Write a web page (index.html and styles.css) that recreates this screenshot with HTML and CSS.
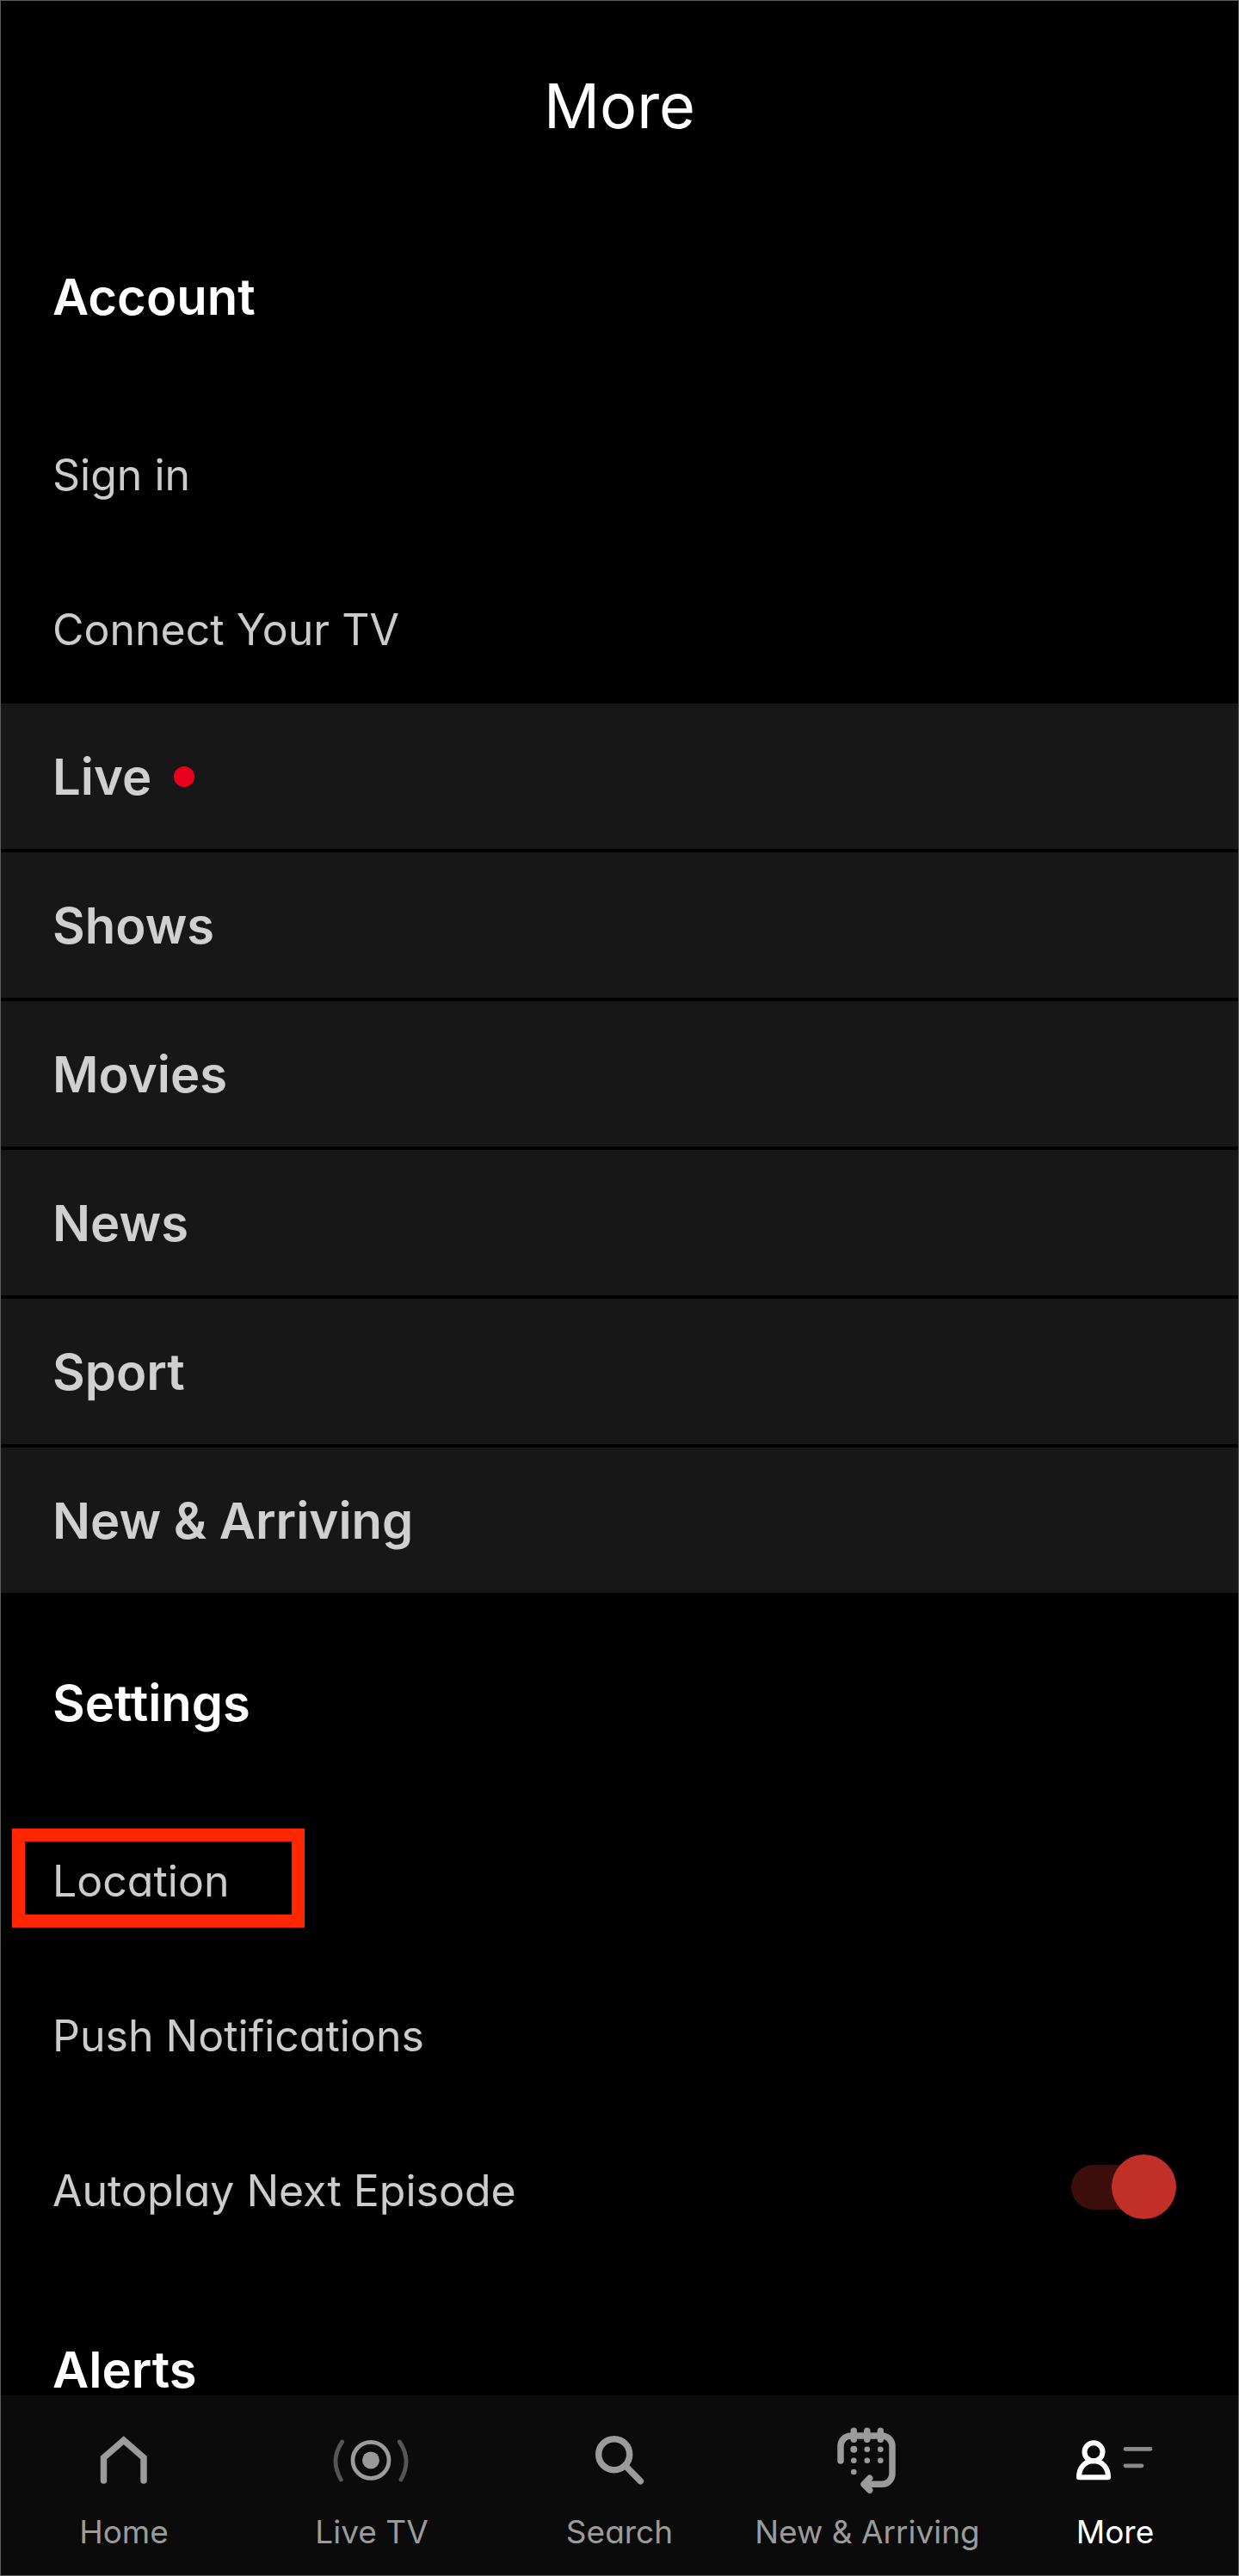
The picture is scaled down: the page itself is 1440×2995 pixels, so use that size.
FILE: index.html
```html
<!DOCTYPE html>
<html lang="en">
<head>
<meta charset="utf-8">
<meta name="viewport" content="width=device-width, initial-scale=1">
<title>More</title>
<link rel="stylesheet" href="styles.css">
</head>
<body>
<header class="header"><h1 class="title">More</h1></header>
<main class="main">
  <section class="group">
    <h2 class="heading">Account</h2>
    <ul class="items">
      <li class="item"><a href="#">Sign in</a></li>
      <li class="item"><a href="#">Connect Your TV</a></li>
    </ul>
  </section>
  <nav class="browse" aria-label="Browse">
    <a class="browse-link" href="#">Live <span class="live-dot"></span></a>
    <a class="browse-link" href="#">Shows</a>
    <a class="browse-link" href="#">Movies</a>
    <a class="browse-link" href="#">News</a>
    <a class="browse-link" href="#">Sport</a>
    <a class="browse-link" href="#">New &amp; Arriving</a>
  </nav>
  <section class="group">
    <h2 class="heading">Settings</h2>
    <ul class="items">
      <li class="item item-marked"><a href="#">Location</a></li>
      <li class="item"><a href="#">Push Notifications</a></li>
      <li class="item item-switch">
        <label for="autoplay">Autoplay Next Episode</label>
        <input class="switch" type="checkbox" role="switch" id="autoplay" checked>
      </li>
    </ul>
  </section>
  <section class="group">
    <h2 class="heading">Alerts</h2>
  </section>
</main>
<nav class="tabs" aria-label="Main">
  <a class="tab" href="#">
    <svg class="tab-icon" viewBox="0 0 100 80" aria-hidden="true">
      <path d="M26.5 64V37.5L49.8 17.2 73 37.5V64" stroke-width="7.5" stroke-linejoin="miter"/>
    </svg>
    Home
  </a>
  <a class="tab" href="#">
    <svg class="tab-icon" viewBox="0 0 100 80" aria-hidden="true">
      <circle cx="49" cy="40.4" r="21" stroke-width="4.8"/>
      <circle class="solid" cx="49" cy="40.4" r="10"/>
      <path class="dim" d="M15.7 19Q1 40 14.3 63M82.3 19Q97 40 84 63" stroke-width="4.8"/>
    </svg>
    Live TV
  </a>
  <a class="tab" href="#">
    <svg class="tab-icon" viewBox="0 0 100 80" aria-hidden="true">
      <circle cx="43.7" cy="33.7" r="18" stroke-width="7.5"/>
      <path d="M58 48 74.3 64.7" stroke-width="7.5"/>
    </svg>
    Search
  </a>
  <a class="tab" href="#">
    <svg class="tab-icon" viewBox="0 0 100 80" aria-hidden="true">
      <path d="M19 41V24a12 12 0 0 1 12-12H67a12 12 0 0 1 12 12V56.3a12 12 0 0 1-12 12H48M52.7 61.2 46 68.3 52.7 75.2M34.3 6.3V16.2M49.8 6.3V16.2M65.3 6.3V16.2" stroke-width="7.5"/>
      <path class="solid" d="M44 68.3 53 60V77Z"/>
      <g class="solid">
        <circle cx="34.3" cy="27.7" r="4"/>
        <circle cx="49.8" cy="27.7" r="3.3"/>
        <circle cx="65.3" cy="27.7" r="3.3"/>
        <circle cx="34.3" cy="40.7" r="3.3"/>
        <circle cx="49.8" cy="40.7" r="3.3"/>
        <circle cx="65.3" cy="40.7" r="3.3"/>
        <circle cx="34.3" cy="54" r="3.3"/>
      </g>
    </svg>
    New &amp; Arriving
  </a>
  <a class="tab tab-current" href="#" aria-current="page">
    <svg class="tab-icon" viewBox="0 0 100 80" aria-hidden="true">
      <circle cx="25" cy="30.7" r="10.5" stroke-width="6"/>
      <path d="M8 60.3C8 49 15 41.3 25 41.3S42 49 42 60.3Z" stroke-width="6"/>
      <path class="lines" d="M62 27.3H91M62 46.8H81" stroke-width="4.8"/>
    </svg>
    More
  </a>
</nav>
</body>
</html>
```
FILE: styles.css
```css
*, *::before, *::after { box-sizing: border-box; }

body {
  margin: 0;
  padding-bottom: 203px;
  background: #000;
  color: #ccc;
  font-family: Inter, "Liberation Sans", sans-serif;
  /* single-storey a */
  font-feature-settings: "cv11";
}

/* hairline around the screen */
body::after {
  content: "";
  position: fixed;
  inset: 0;
  border: 1px solid #5c5c5c;
  pointer-events: none;
}

a { color: inherit; text-decoration: none; }

.header { padding: 78px 61px 49px; }

.title {
  margin: 0;
  color: #fff;
  font-size: 72px;
  font-weight: 400;
  line-height: 90px;
  text-align: center;
}

.group { padding: 92px 73px 56px 61px; }
.group + .group { padding-top: 86px; padding-bottom: 0; }

.heading {
  margin: 0;
  color: #fff;
  font-size: 58px;
  font-weight: 600;
  line-height: 72px;
}

.items {
  display: flex;
  flex-direction: column;
  gap: 120px;
  margin: 141px 0 0;
  padding: 0;
  list-style: none;
}

.item { font-size: 50px; line-height: 60px; }

.item-marked { position: relative; }

.item-marked::before {
  content: "";
  position: absolute;
  top: -31px;
  left: -47px;
  width: 340px;
  height: 115px;
  border: 15px solid #ff2600;
  pointer-events: none;
}

.item-switch {
  display: flex;
  justify-content: space-between;
  align-items: flex-start;
  height: 60px;
}

.switch {
  appearance: none;
  position: relative;
  width: 122px;
  height: 52px;
  margin: 0;
  border-radius: 26px;
  background: #3b0d0b;
}

.switch::before {
  content: "";
  position: absolute;
  top: -12px;
  left: 0;
  width: 75px;
  height: 75px;
  border-radius: 50%;
  background: #c12f28;
}

.switch:checked::before { left: auto; right: 0; }

.browse { display: flex; flex-direction: column; gap: 4px; }

.browse-link {
  display: flex;
  align-items: center;
  gap: 26px;
  height: 169px;
  padding: 0 61px;
  background: #171717;
  color: #d0d0d0;
  font-size: 58px;
  font-weight: 600;
  line-height: 72px;
}

.live-dot {
  width: 24px;
  height: 24px;
  border-radius: 50%;
  background: #e9001c;
}

.tabs {
  position: fixed;
  right: 0;
  bottom: 0;
  left: 0;
  display: grid;
  grid-template-columns: repeat(5, 1fr);
  background: #0b0b0b;
}

.tab {
  display: flex;
  flex-direction: column;
  align-items: center;
  gap: 20px;
  padding: 35px 0 27px;
  color: #9b9b9b;
  font-size: 37px;
  line-height: 48px;
  white-space: nowrap;
}

.tab-current { color: #fff; }

.tab-icon {
  width: 100px;
  height: 80px;
  fill: none;
  stroke: currentColor;
  stroke-linecap: round;
  stroke-linejoin: round;
}

.solid { fill: currentColor; stroke: none; }
.dim { stroke: #565656; }
.lines { stroke: #8a8a8a; }
```
